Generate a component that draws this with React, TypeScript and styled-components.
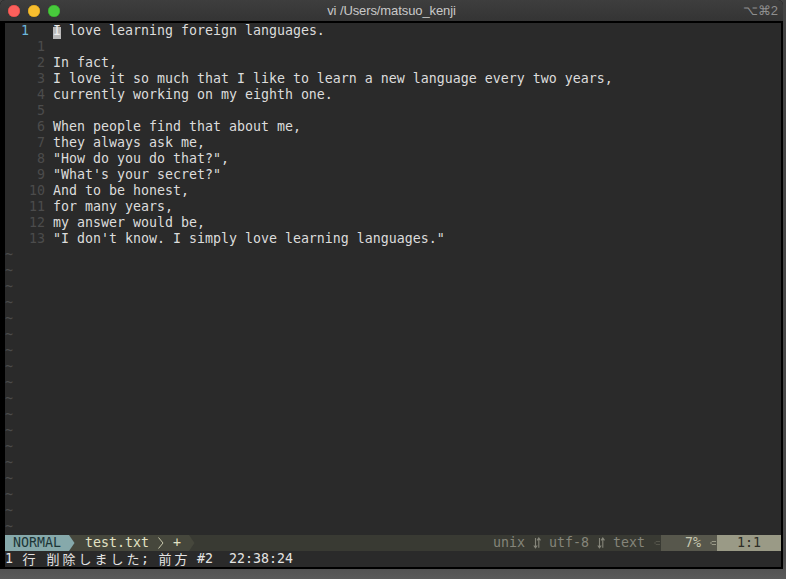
import React from "react";
import styled, { createGlobalStyle } from "styled-components";

const Global = createGlobalStyle`
  html, body { margin: 0; padding: 0; }
  body {
    width: 786px;
    height: 579px;
    overflow: hidden;
    background: linear-gradient(#444 0%, #4a4a4a 96%, #5a5a5a 100%);
  }
`;

const Window = styled.div`
  width: 783px;
  height: 569px;
  display: flex;
  flex-direction: column;
  border-radius: 5px 5px 0 0;
  overflow: hidden;
  background: #000;
`;

const TitleBar = styled.div`
  height: 21px;
  flex: none;
  display: grid;
  grid-template-columns: 80px 1fr 80px;
  align-items: center;
  background: linear-gradient(#3e3e3e, #343434);
  font-family: "Liberation Sans", Arial, sans-serif;
  font-size: 13px;
`;

const Lights = styled.div`
  display: flex;
  gap: 8px;
  padding-left: 8px;
  align-items: center;
`;

const Light = styled.span<{ $c: string; $b: string }>`
  width: 12px;
  height: 12px;
  border-radius: 50%;
  background: ${(p) => p.$c};
  box-shadow: inset 0 0 0 0.5px ${(p) => p.$b};
`;

const Title = styled.div`
  text-align: center;
  color: #c9c9c9;
  letter-spacing: -0.1px;
`;

const Shortcut = styled.div`
  text-align: right;
  padding-right: 5px;
  color: #8f8f8f;
`;

const Term = styled.div`
  flex: 1;
  padding: 2px 2px 2px 5px;
  background: #000;
`;

const Vim = styled.div`
  width: 776px;
  height: 544px;
  background: #2a2a2a;
  font-family: "DejaVu Sans Mono", "Noto Sans CJK JP", monospace;
  font-size: 13.29px;
  line-height: 16px;
  color: #dcdcdc;
  display: flex;
  flex-direction: column;
`;

const Row = styled.div`
  height: 16px;
  white-space: pre;
  display: flex;
`;

const Num = styled.span<{ $current?: boolean }>`
  width: 48px;
  flex: none;
  color: ${(p) => (p.$current ? "#6db7dc" : "#4c4c4c")};
`;

const Tilde = styled.span`
  color: #4b4b4b;
`;

const Cursor = styled.span`
  display: inline-block;
  background: linear-gradient(
    transparent 4px,
    #b9b9b9 4px,
    #b9b9b9 16px,
    transparent 16px
  );
  color: #ececec;
`;

const Status = styled.div`
  height: 16px;
  display: flex;
  white-space: pre;
  background: #393a33;
  color: #85857a;
`;

const ModeSeg = styled.span`
  background: #86a9ab;
  color: #1c3537;
  width: 64px;
`;

const Cell = styled.span<{ $bg: string }>`
  width: 8px;
  height: 16px;
  flex: none;
  background: ${(p) => p.$bg};
  display: flex;
`;

const FileSeg = styled.span`
  background: #46473c;
  color: #e2e2c4;
  display: flex;
`;

const Spacer = styled.span`
  flex: 1;
`;

const InfoSeg = styled.span`
  display: flex;
  color: #85857a;
`;

const PercentSeg = styled.span`
  display: flex;
  width: 56px;
  background: #57574c;
  color: #c6c6b0;
`;

const PosSeg = styled.span`
  width: 64px;
  background: #9a9a86;
  color: #2e2e27;
  padding-left: 20px;
  box-sizing: border-box;
`;

const CmdLine = styled.div`
  height: 16px;
  white-space: pre;
  color: #e4e4e4;
  display: flex;
`;

const Wide = styled.span`
  display: inline-block;
  width: 16px;
  text-align: center;
  font-family: "Noto Sans CJK JP", sans-serif;
  font-size: 13px;
`;

const Arrow = ({ color }: { color: string }) => (
  <svg width="8" height="16" viewBox="0 0 8 16">
    <polygon points="0,0 5.5,8 0,16" fill={color} />
  </svg>
);

const Chevron = ({ color }: { color: string }) => (
  <svg width="8" height="16" viewBox="0 0 8 16">
    <polyline points="1.5,2.5 6,8 1.5,13.5" fill="none" stroke={color} strokeWidth="1" />
  </svg>
);

const UpDown = ({ color }: { color: string }) => (
  <svg width="8" height="16" viewBox="0 0 8 16">
    <path d="M2.5 3 V12.5 M0.8 10.5 L2.5 12.8 L4.2 10.5 M5.8 12.8 V3.3 M4.1 5.3 L5.8 3 L7.5 5.3" fill="none" stroke={color} strokeWidth="1.1" />
  </svg>
);

const SoftSep = ({ color }: { color: string }) => (
  <svg width="8" height="16" viewBox="0 0 8 16">
    <path d="M7 6.5 H3 L1.5 8 L3 9.5 H7" fill="none" stroke={color} strokeWidth="1" />
  </svg>
);

const lines: { n: string; text: string; current?: boolean }[] = [
  { n: "  1   ", text: " love learning foreign languages.", current: true },
  { n: "    1 ", text: "" },
  { n: "    2 ", text: "In fact," },
  { n: "    3 ", text: "I love it so much that I like to learn a new language every two years," },
  { n: "    4 ", text: "currently working on my eighth one." },
  { n: "    5 ", text: "" },
  { n: "    6 ", text: "When people find that about me," },
  { n: "    7 ", text: "they always ask me," },
  { n: "    8 ", text: "\"How do you do that?\"," },
  { n: "    9 ", text: "\"What's your secret?\"" },
  { n: "   10 ", text: "And to be honest," },
  { n: "   11 ", text: "for many years," },
  { n: "   12 ", text: "my answer would be," },
  { n: "   13 ", text: "\"I don't know. I simply love learning languages.\"" },
];

const cmd = "1 行 削除しました; 前方 #2  22:38:24";

export default function App() {
  return (
    <>
      <Global />
      <Window>
        <TitleBar>
          <Lights>
            <Light $c="#fc605c" $b="#de4a46" />
            <Light $c="#f7be2f" $b="#d9a21a" />
            <Light $c="#48c93c" $b="#34a92a" />
          </Lights>
          <Title>vi /Users/matsuo_kenji</Title>
          <Shortcut>⌥⌘2</Shortcut>
        </TitleBar>
        <Term>
          <Vim>
            {lines.map((l, i) => (
              <Row key={i}>
                <Num $current={l.current}>{l.n}</Num>
                {l.current && <Cursor>I</Cursor>}
                <span>{l.text}</span>
              </Row>
            ))}
            {Array.from({ length: 18 }).map((_, i) => (
              <Row key={"t" + i}>
                <Tilde>~</Tilde>
              </Row>
            ))}
            <Status>
              <ModeSeg> NORMAL </ModeSeg>
              <Cell $bg="#46473c">
                <Arrow color="#86a9ab" />
              </Cell>
              <FileSeg>
                {" test.txt "}
                <Chevron color="#c9c9ad" />
                {" + "}
              </FileSeg>
              <Cell $bg="#393a33">
                <Arrow color="#46473c" />
              </Cell>
              <Spacer />
              <InfoSeg>
                {"unix "}
                <UpDown color="#85857a" />
                {" utf-8 "}
                <UpDown color="#85857a" />
                {" text "}
                <SoftSep color="#55554b" />
              </InfoSeg>
              <PercentSeg>
                {"   7% "}
                <SoftSep color="#9a9a88" />
              </PercentSeg>
              <PosSeg>1:1</PosSeg>
            </Status>
            <CmdLine>
              {Array.from(cmd).map((ch, i) =>
                /[\u3000-\u9fff]/.test(ch) ? <Wide key={i}>{ch}</Wide> : <span key={i}>{ch}</span>
              )}
            </CmdLine>
          </Vim>
        </Term>
      </Window>
    </>
  );
}
